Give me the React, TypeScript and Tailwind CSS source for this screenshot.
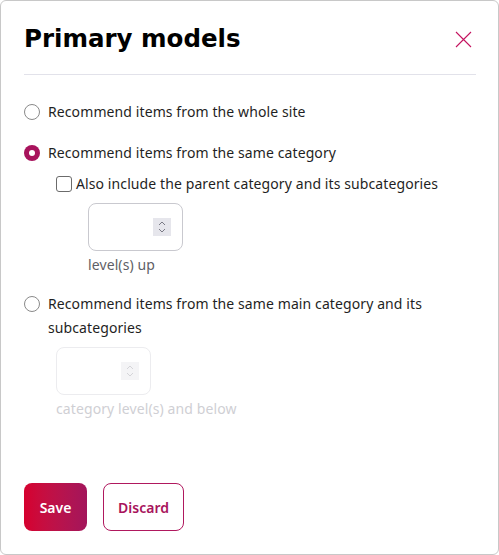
import React, { useState } from 'react';

const Spinner: React.FC<{ disabled?: boolean }> = ({ disabled }) => (
  <div
    className={`flex h-[18px] w-[18px] flex-col items-center justify-center ${
      disabled ? 'bg-[#f4f4f6]' : 'bg-[#e6e6ec]'
    }`}
  >
    <svg width="10" height="14" viewBox="0 0 10 14" fill="none">
      <path
        d="M2 5 L5 2 L8 5 M2 9 L5 12 L8 9"
        stroke={disabled ? '#d4d4d8' : '#7a7a85'}
        strokeWidth="1"
      />
    </svg>
  </div>
);

const NumberBox: React.FC<{ disabled?: boolean }> = ({ disabled }) => (
  <div
    className={`flex h-[48px] w-[95px] items-center justify-end rounded-lg border pr-[11px] ${
      disabled ? 'border-[#ececef]' : 'border-[#c9c9cf]'
    }`}
  >
    <Spinner disabled={disabled} />
  </div>
);

const Radio: React.FC<{ checked?: boolean }> = ({ checked }) =>
  checked ? (
    <span className="flex h-4 w-4 shrink-0 items-center justify-center rounded-full bg-[#a8135c]">
      <span className="h-[6px] w-[6px] rounded-full bg-white" />
    </span>
  ) : (
    <span className="block h-4 w-4 shrink-0 rounded-full border border-[#8a8a8a] bg-white" />
  );

export default function App() {
  const [choice, setChoice] = useState<'site' | 'category' | 'main'>('category');

  return (
    <div className="flex h-[555px] w-[499px] flex-col rounded-md border border-[#c8c8c8] bg-white pl-[23px] pr-[22px] font-['Noto_Sans',sans-serif] text-[#1f1f24]">
      <div className="mt-[21px] flex items-center justify-between">
        <h1 className="font-['DejaVu_Sans',sans-serif] text-[24.5px] font-bold leading-[34px] text-black">
          Primary models
        </h1>
        <button className="mr-[4px] text-[#c4135f]" aria-label="Close">
          <svg width="17" height="17" viewBox="0 0 17 17" fill="none">
            <path d="M1 1 L16 16 M16 1 L1 16" stroke="currentColor" strokeWidth="1.1" />
          </svg>
        </button>
      </div>

      <div className="mt-[18px] border-t border-[#e2e2ea]" />

      <div className="mt-[25px] flex flex-col text-[14px] leading-[24px] tracking-[0.1px]">
        <button onClick={() => setChoice('site')} className="flex items-center gap-2 text-left">
          <Radio checked={choice === 'site'} />
          <span>Recommend items from the whole site</span>
        </button>

        <button onClick={() => setChoice('category')} className="mt-[17px] flex items-center gap-2 text-left">
          <Radio checked={choice === 'category'} />
          <span>Recommend items from the same category</span>
        </button>

        <label className="mt-[7px] ml-[32px] flex items-center gap-[4px]">
          <span className="h-4 w-4 shrink-0 rounded-[3px] border border-[#6b6b6b] bg-white" />
          <span>Also include the parent category and its subcategories</span>
        </label>

        <div className="mt-[7px] ml-[64px]">
          <NumberBox />
          <div className="mt-[2px] text-[#5f5f66]">level(s) up</div>
        </div>

        <button onClick={() => setChoice('main')} className="mt-[15px] flex items-start gap-2 text-left">
          <span className="mt-[4px] block">
            <Radio checked={choice === 'main'} />
          </span>
          <span className="w-[400px]">
            Recommend items from the same main category and its subcategories
          </span>
        </button>

        <div className="mt-[7px] ml-[32px]">
          <NumberBox disabled />
          <div className="mt-[2px] text-[#cfcfd4]">category level(s) and below</div>
        </div>
      </div>

      <div className="mt-[62px] flex gap-4 text-[14px] font-semibold">
        <button className="h-[48px] w-[63px] rounded-lg bg-gradient-to-r from-[#d6002e] to-[#a3155b] text-white">
          Save
        </button>
        <button className="h-[48px] w-[81px] rounded-lg border border-[#b0185e] text-[#a8135c]">
          Discard
        </button>
      </div>
    </div>
  );
}
